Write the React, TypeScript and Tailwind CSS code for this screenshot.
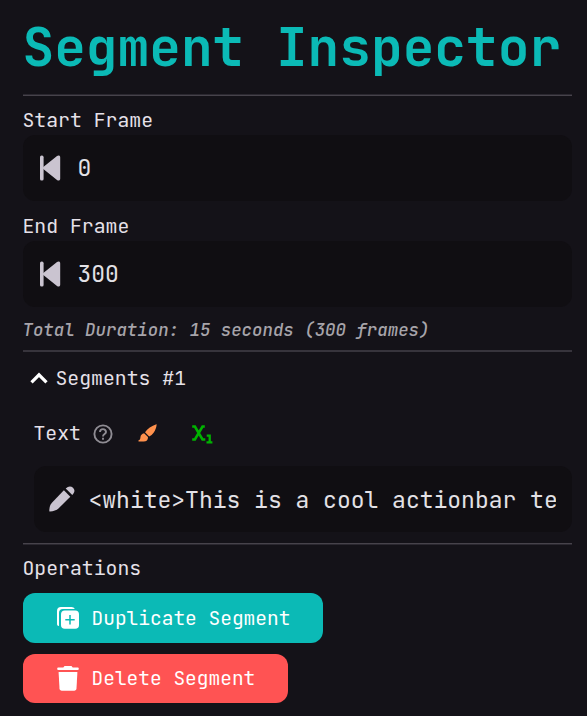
import type { ReactNode } from "react";

function SkipStartIcon() {
  return (
    <svg className="h-[26px] w-[22px] shrink-0" viewBox="0 0 22 26" fill="#cac4d0">
      <rect x="1" y="0.6" width="3.6" height="25" rx="1.6" />
      <path d="M4.6 11.7 18 1c1.5-1.1 3.2-.5 3.2 1.2v21.6c0 1.700-1.700 2.300-3.200 1.200L4.600 14.300c-.9-.7-.9-1.900 0-2.600Z" />
    </svg>
  );
}

function PencilIcon() {
  return (
    <svg className="-ml-px h-[26px] w-[26px] shrink-0" viewBox="0 0 26 26" fill="#cac4d0">
      <path d="M14.900 4.300 21.300 10.700 9.200 22.800C7.600 24.300 4.500 25.200 1 25.600c-.4 0-.7-.3-.7-.7C.3 21.300 1.200 18.500 2.900 16.700Z" />
      <path d="M16.700 2.500C19.200-.1 22-.2 24 1.800s2 4.500-.700 7.100Z" />
    </svg>
  );
}

function DuplicateIcon() {
  return (
    <svg className="h-[22px] w-[22px] shrink-0" viewBox="0 0 22 22" fill="none">
      <path d="M0 17V4a4 4 0 0 1 4-4h10.500c1.500 0 2.700.8 3.300 2H6a4 4 0 0 0-4 4v13C.8 19.100 0 18.300 0 17Z" fill="white" />
      <rect x="4" y="3.600" width="18" height="18.200" rx="3.800" fill="white" />
      <path d="M13 8v9.400M8.300 12.700h9.400" stroke="#0bbab6" strokeWidth="1.500" />
    </svg>
  );
}

function TrashIcon() {
  return (
    <svg className="h-[25px] w-[22px] shrink-0" viewBox="0 0 22 25" fill="white">
      <path d="M7.500 0h7l1.200 1.500h4.800c.8 0 1.300.5 1.300 1.300s-.5 1.300-1.300 1.300h-19C.7 4.100.2 3.600.2 2.800s.5-1.300 1.300-1.300h4.800Z" />
      <path d="M1.600 6h18.800l-.9 16.600c-.1 1.300-1 2.100-2.300 2.100H4.800c-1.300 0-2.200-.8-2.300-2.100Z" />
    </svg>
  );
}

function ChevronUpIcon() {
  return (
    <svg className="h-[12px] w-[18px]" viewBox="0 0 18 12" fill="none" stroke="white" strokeWidth="3.200">
      <path d="m1.500 10.300 7.500-7.500 7.500 7.500" />
    </svg>
  );
}

function HelpIcon() {
  return (
    <svg className="relative top-px ml-[11px] h-[22px] w-[22px]" viewBox="0 0 22 22" fill="none" stroke="#8f8c93" strokeWidth="1.900">
      <circle cx="11" cy="11" r="8.600" />
      <path d="M8 9.100a3 3 0 1 1 6 0c0 1.900-3 2.100-3 4.300" />
      <path d="M11 14.800v1.900" />
    </svg>
  );
}

function BrushIcon() {
  return (
    <svg className="ml-6 h-[18px] w-[19px]" viewBox="0 0 19 18" fill="#ff914d">
      <path d="M18.400.2c.3.200.3.500.2.900-.3 2.500-1.200 5.200-2.800 7.300-1.300 1.800-3 3.200-4.600 4.100L7 8.200C9.400 4.700 13.600 1.700 18.400.2Z" />
      <path d="M6.100 9.200 10 13.100c.1 3.200-1.500 4.500-4.300 4.500H.5v-1.400c1.500-.3 1.800-1.300 1.900-2.800.2-2.400 1.500-3.700 3.700-4.200Z" />
    </svg>
  );
}

function SubscriptIcon() {
  return (
    <svg className="relative top-px ml-[35px] h-[19px] w-[21px]" viewBox="0 0 21 19" fill="none" stroke="#00b300">
      <path d="M.2 1.500h2.700l7.600 13h2.800M12.800 1.500h-2.300l-7.600 13H.2" strokeWidth="2.600" />
      <path d="M14.700 10.700h3v6.600M14.500 17.400h5.900" strokeWidth="2.300" />
    </svg>
  );
}

function Field({ icon, children }: { icon: ReactNode; children: ReactNode }) {
  return (
    <div className="flex h-[66px] items-center rounded-xl bg-[#100e12] pl-4 pr-4 text-[23px] leading-8 text-[#e3e1e6]">
      {icon}
      <span className="min-w-0 flex-1 overflow-hidden whitespace-nowrap">{children}</span>
    </div>
  );
}

export default function App() {
  return (
    <main className="h-[716px] w-[587px] overflow-hidden bg-[#141218] pl-[22.500px] pr-[14.600px] font-['JetBrains_Mono','DejaVu_Sans_Mono',monospace] text-[19.800px] leading-6 text-[#e6e1e9]">
      <h1 className="h-[94px] whitespace-nowrap pt-[17px] text-[52.800px] font-bold leading-[60px] text-[#0bbab6]">
        Segment Inspector
      </h1>
      <div className="h-[2px] border-t border-[#2b2830] bg-[#47434b]" />
      <div className="mt-3 mb-[3px]">Start Frame</div>
      <Field icon={<SkipStartIcon />}>
        <span className="ml-[17px]">0</span>
      </Field>
      <div className="mt-[13px] mb-[3px]">End Frame</div>
      <Field icon={<SkipStartIcon />}>
        <span className="ml-[17px]">300</span>
      </Field>
      <p className="mt-[11px] mb-2 whitespace-nowrap text-[17.400px] font-medium italic text-[#a7a4aa]">
        Total Duration: 15 seconds (300 frames)
      </p>
      <div className="h-[2px] bg-[#37343c]" />
      <div className="mt-[14px] flex items-center gap-2 pl-[7px]">
        <ChevronUpIcon />
        <span>Segments #1</span>
      </div>
      <div className="mt-[31px] ml-[11px] flex items-center">
        <span>Text</span>
        <HelpIcon />
        <BrushIcon />
        <SubscriptIcon />
      </div>
      <div className="mt-[21px] mb-[11px] ml-[11px]">
        <Field icon={<PencilIcon />}>
          <span className="relative top-px ml-[14px]">&lt;white&gt;This is a cool actionbar text</span>
        </Field>
      </div>
      <div className="h-[2px] border-b border-[#2b2830] bg-[#47434b]" />
      <div className="mt-[11px] mb-[13px]">Operations</div>
      <div className="flex flex-col items-start gap-[11px] text-[19.500px] text-white">
        <button className="flex h-[49.500px] w-[300.500px] items-center gap-[13px] rounded-xl bg-[#0bbab6] pl-[34px]">
          <DuplicateIcon />
          Duplicate Segment
        </button>
        <button className="flex h-[49.500px] w-[265.500px] items-center gap-[13px] rounded-xl bg-[#ff5353] pl-[34px]">
          <TrashIcon />
          Delete Segment
        </button>
      </div>
    </main>
  );
}
